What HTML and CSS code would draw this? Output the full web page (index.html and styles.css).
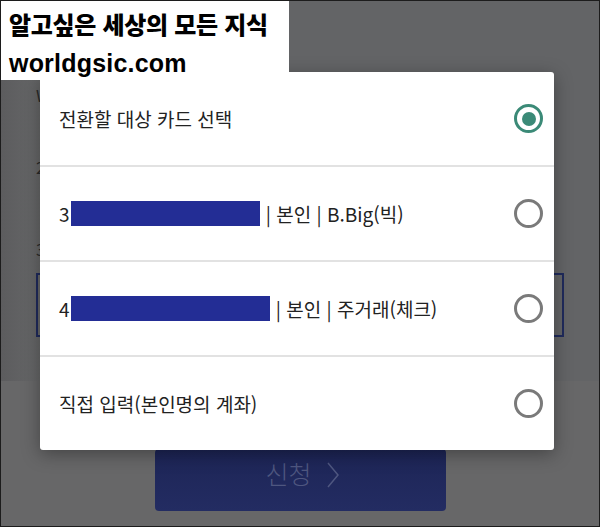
FILE: index.html
```html
<!DOCTYPE html>
<html lang="ko">
<head>
<meta charset="utf-8">
<link rel="stylesheet" href="styles.css">
</head>
<body>
<div class="frame">
  <div class="page">
    <div class="page-top">
      <p class="bg-line l1">W</p>
      <p class="bg-line l2">2</p>
      <p class="bg-line l3">3</p>
      <div class="bg-box"></div>
    </div>
    <div class="page-bottom">
      <button class="apply">신청<svg class="chev" width="12" height="26" viewBox="0 0 12 26"><polyline points="1,1 11,13 1,25" fill="none" stroke="#4f5780" stroke-width="1.5"/></svg></button>
    </div>
  </div>

  <div class="modal">
    <div class="row">
      <span class="label">전환할 대상 카드 선택</span>
      <span class="radio checked"></span>
    </div>
    <div class="row">
      <span class="label">3<span class="mask m1"></span> | 본인 | B.Big(빅)</span>
      <span class="radio"></span>
    </div>
    <div class="row">
      <span class="label">4<span class="mask m2"></span> | 본인 | 주거래(체크)</span>
      <span class="radio"></span>
    </div>
    <div class="row">
      <span class="label">직접 입력(본인명의 계좌)</span>
      <span class="radio"></span>
    </div>
  </div>

  <div class="watermark">
    <p class="wm1">알고싶은 세상의 모든 지식</p>
    <p class="wm2">worldgsic.com</p>
  </div>
</div>
</body>
</html>
```

FILE: styles.css
```css
* { box-sizing: border-box; }
html, body { margin: 0; padding: 0; }
body {
  width: 600px;
  height: 527px;
  overflow: hidden;
  font-family: "Noto Sans CJK KR", "Noto Sans", sans-serif;
}
.frame {
  position: relative;
  width: 600px;
  height: 527px;
  border: 1px solid #1c1c1c;
  background: #636466;
  overflow: hidden;
}
.page {
  display: flex;
  flex-direction: column;
  height: 100%;
}
.page-top {
  height: 380px;
  padding: 0 35px;
  position: relative;
  background: linear-gradient(to right, #5c5c5e 0, #666768 40px, #636466 60px);
}
.bg-line {
  margin: 0;
  color: #2a2a2a;
  font-size: 16px;
  line-height: 20px;
}
.l1 { padding-top: 84px; }
.l2 { padding-top: 52px; }
.l3 { padding-top: 62px; }
.bg-box {
  margin-top: 14px;
  height: 64px;
  border: 2px solid #1f2a5c;
}
.page-bottom {
  flex: 1;
  background: #676768;
  display: flex;
  justify-content: center;
  padding-top: 68px;
}
.apply {
  width: 291px;
  height: 62px;
  border: none;
  border-radius: 4px;
  background: linear-gradient(#1d2556, #232c62);
  color: #4f5780;
  font-family: "Noto Sans CJK KR", sans-serif;
  font-size: 25px;
  font-weight: 300;
  display: flex;
  align-items: center;
  justify-content: center;
  gap: 15px;
  padding: 0 0 15px 4px;
}
.chev { margin-top: 4px; }
.watermark {
  position: absolute;
  left: 0;
  top: 0;
  width: 288px;
  height: 79px;
  background: #fff;
  padding: 6px 0 0 8px;
}
.watermark p {
  margin: 0;
  font-weight: 900;
  color: #000;
}
.wm1 {
  font-size: 24px;
  line-height: 34px;
  letter-spacing: -0.3px;
}
.wm2 {
  font-family: "Liberation Sans", Arial, sans-serif;
  font-weight: 700;
  font-size: 25px;
  line-height: 36px;
  margin-top: 4px !important;
  letter-spacing: 0.2px;
}
.modal {
  position: absolute;
  left: 39px;
  top: 71px;
  width: 514px;
  height: 378px;
  background: #fff;
  border-radius: 3px;
  box-shadow: 0 4px 18px rgba(0,0,0,0.35);
  display: flex;
  flex-direction: column;
}
.row {
  flex: 1;
  display: flex;
  align-items: center;
  justify-content: space-between;
  padding: 0 11px 0 19px;
}
.row + .row { border-top: 2px solid #e2e2e2; }
.label {
  font-size: 19px;
  color: #222;
  display: flex;
  align-items: center;
  white-space: pre;
}
.mask {
  display: inline-block;
  height: 25px;
  background: #232d95;
  margin: 0 1px;
}
.m1 { width: 189px; }
.m2 { width: 199px; }
.radio {
  width: 29px;
  height: 29px;
  border-radius: 50%;
  border: 3px solid #7a7a7a;
  display: flex;
  align-items: center;
  justify-content: center;
}
.radio.checked { border-color: #3b8a77; }
.radio.checked::after {
  content: "";
  width: 14px;
  height: 14px;
  border-radius: 50%;
  background: #3b8a77;
}
```
